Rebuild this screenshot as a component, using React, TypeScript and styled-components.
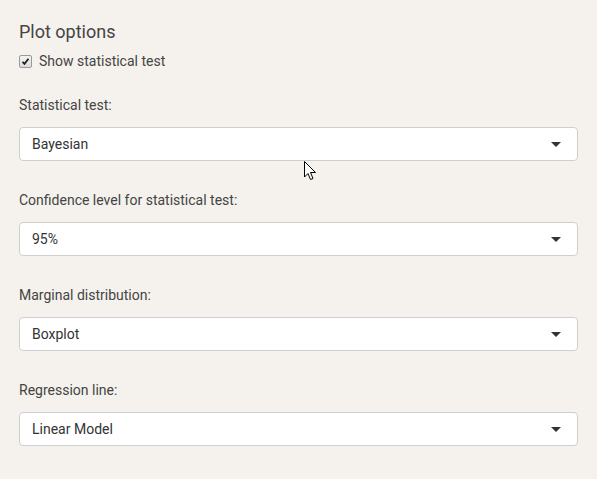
import React from "react";
import styled, { createGlobalStyle } from "styled-components";

const Global = createGlobalStyle`
  html, body { margin: 0; padding: 0; background: #f5f2ed; }
  body { font-family: Roboto, "Liberation Sans", sans-serif; color: #333; }
`;

const Panel = styled.div`
  position: relative;
  width: 597px;
  height: 479px;
  box-sizing: border-box;
  padding: 20px 19px 0 19px;
  background: #f5f2ed;
  overflow: hidden;
`;

const Title = styled.h3`
  margin: 0 0 7px 0;
  font-size: 18px;
  line-height: 24px;
  font-weight: 400;
  color: #444;
`;

const CheckRow = styled.label`
  display: flex;
  align-items: center;
  gap: 7px;
  height: 20px;
  font-size: 14px;
  color: #444;
  margin-bottom: 24px;
`;

const Box = styled.span`
  display: inline-flex;
  align-items: center;
  justify-content: center;
  width: 11px;
  height: 11px;
  border: 1px solid #9a9a9a;
  border-radius: 2px;
  background: linear-gradient(#f4f4f4, #dcdcdc);
`;

const Field = styled.div`
  display: flex;
  flex-direction: column;
  margin-bottom: 29px;
`;

const Label = styled.div`
  font-size: 14px;
  line-height: 20px;
  color: #444;
  margin-bottom: 12px;
`;

const Select = styled.div`
  box-sizing: border-box;
  height: 34px;
  width: 559px;
  display: flex;
  align-items: center;
  justify-content: space-between;
  padding: 0 16px 0 12px;
  background: #fff;
  border: 1px solid #cfcfcf;
  border-radius: 4px;
  font-size: 14px;
  color: #333;
`;

const Caret = styled.span`
  width: 0;
  height: 0;
  border-left: 5px solid transparent;
  border-right: 5px solid transparent;
  border-top: 5px solid #333;
`;

const Cursor = styled.svg`
  position: absolute;
  left: 304px;
  top: 161px;
`;

const fields = [
  ["Statistical test:", "Bayesian"],
  ["Confidence level for statistical test:", "95%"],
  ["Marginal distribution:", "Boxplot"],
  ["Regression line:", "Linear Model"],
];

export default function App() {
  return (
    <>
      <Global />
      <Panel>
        <Title>Plot options</Title>
        <CheckRow>
          <Box>
            <svg width="9" height="9" viewBox="0 0 9 9">
              <path d="M1.5 4.8 L3.5 6.8 L7.5 1.8" fill="none" stroke="#222" strokeWidth="1.8" />
            </svg>
          </Box>
          Show statistical test
        </CheckRow>
        {fields.map(([l, v]) => (
          <Field key={l}>
            <Label>{l}</Label>
            <Select>
              <span>{v}</span>
              <Caret />
            </Select>
          </Field>
        ))}
        <Cursor width="13" height="20" viewBox="0 0 13 20">
          <path d="M0.5 0.5 L0.5 16 L4 12.5 L6.5 18.5 L9 17.5 L6.5 11.5 L11.5 11.5 Z" fill="#fff" stroke="#000" strokeWidth="1" />
        </Cursor>
      </Panel>
    </>
  );
}
